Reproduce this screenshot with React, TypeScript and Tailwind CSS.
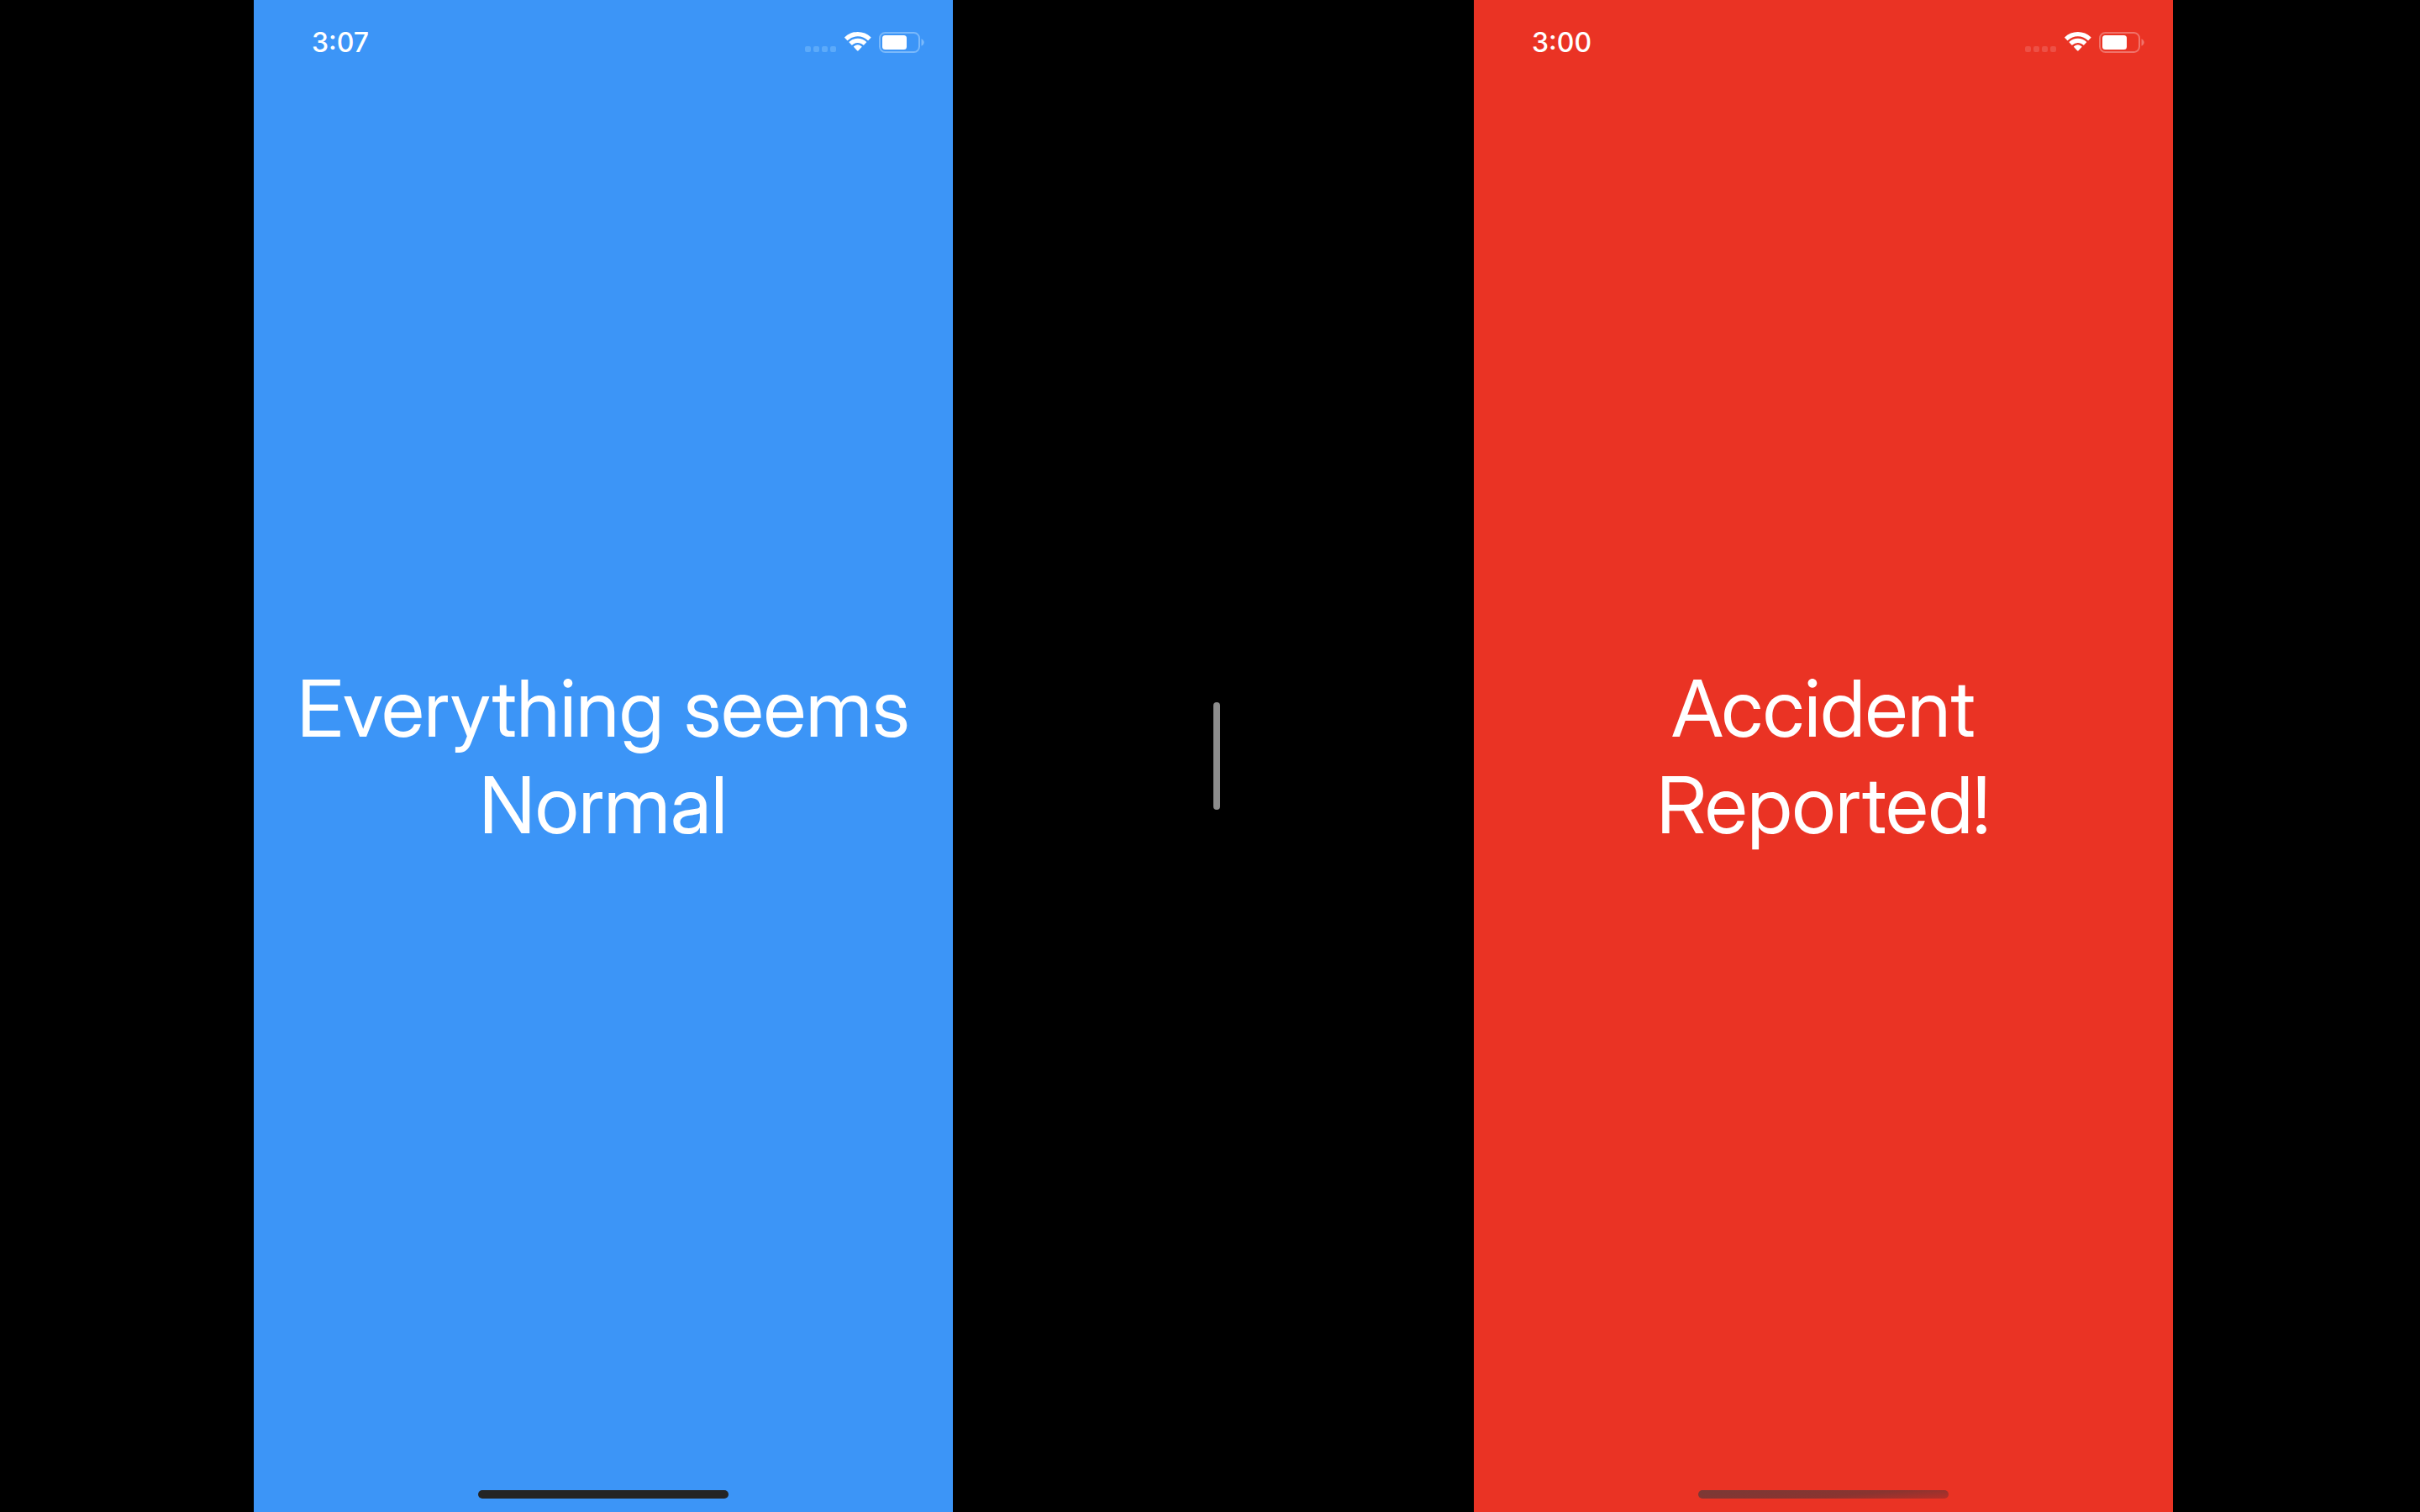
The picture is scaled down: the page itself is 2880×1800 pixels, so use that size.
type PhoneProps = {
  time: string;
  lines: string[];
  screen: string;
  dots: string;
  battery: string;
  indicator: string;
};

function StatusIcons({ dots, battery }: { dots: string; battery: string }) {
  return (
    <div className="flex items-center">
      <svg width="142" height="28" viewBox="0 0 142 28" role="img" aria-label="No signal, Wi-Fi on, battery 65 percent">
        <g className={dots}>
          <rect x="0" y="18" width="7" height="7" rx="2" />
          <rect x="10" y="18" width="7" height="7" rx="2" />
          <rect x="20" y="18" width="7" height="7" rx="2" />
          <rect x="30" y="18" width="7" height="7" rx="2" />
        </g>
        <g className="fill-white">
          <path d="M62.8 6.3c4.4 0 8.6 1.7 11.8 4.7.25.23.63.23.87 0l2.9-2.9c.26-.26.26-.68 0-.94a22.6 22.6 0 0 0-31.14 0c-.26.26-.26.68 0 .94l2.9 2.9c.24.23.62.23.87 0a17.2 17.2 0 0 1 11.8-4.7z" />
          <path d="M62.8 14c2.4 0 4.7.9 6.5 2.5.25.24.63.23.87 0l2.85-2.9c.26-.26.26-.68 0-.93a15 15 0 0 0-20.44 0c-.26.25-.26.67 0 .93l2.85 2.9c.24.23.62.24.87 0A9.7 9.7 0 0 1 62.8 14z" />
          <path d="M67.5 19.1c.26-.26.25-.68-.03-.92a7.5 7.5 0 0 0-9.34 0c-.28.24-.29.66-.03.92l4.2 4.3c.26.27.74.27 1 0z" />
        </g>
        <rect x="89" y="2" width="47" height="23" rx="6.5" className={`fill-none stroke-2 ${battery}`} />
        <path d="M138.5 9.2v8.6c1.9-.8 3.2-2.4 3.2-4.3s-1.3-3.5-3.2-4.3z" className={`stroke-none fill-current ${battery}`} />
        <rect x="92" y="5" width="29" height="17" rx="3.5" className="fill-white" />
      </svg>
    </div>
  );
}

function Phone({ time, lines, screen, dots, battery, indicator }: PhoneProps) {
  return (
    <section className={`relative flex h-full aspect-[104/225] flex-col ${screen}`}>
      <header className="flex h-[102px] items-center justify-between pl-[69px] pr-[34px]">
        <time className="text-[32px] leading-10 font-medium">{time}</time>
        <StatusIcons dots={dots} battery={battery} />
      </header>
      <main className="flex flex-1 items-center justify-center pb-[74px]">
        <h1 className="text-center font-['Inter_Display','Inter',sans-serif] text-[94px] leading-[115px] font-normal [font-variation-settings:'opsz'_32]">
          {lines.map((line) => (
            <span key={line} className="block whitespace-nowrap">
              {line}
            </span>
          ))}
        </h1>
      </main>
      <footer className="flex justify-center pb-4">
        <div className={`h-2.5 w-[298px] rounded-full ${indicator}`} />
      </footer>
    </section>
  );
}

export default function App() {
  return (
    <div className="grid h-screen grid-cols-[1436fr_24px_1420fr] overflow-hidden bg-black font-['Inter',sans-serif] text-white">
      <div className="flex h-screen justify-center">
        <Phone
          time="3:07"
          lines={["Everything seems", "Normal"]}
          screen="bg-[#3c95f7]"
          dots="fill-[#5caafa]"
          battery="stroke-[#7ab9fb] text-[#7ab9fb]"
          indicator="bg-[#242424]"
        />
      </div>
      <div className="flex items-center justify-center">
        <div role="separator" aria-orientation="vertical" className="h-32 w-2 rounded-full bg-[#8c8c8c]" />
      </div>
      <div className="flex h-screen justify-center">
        <Phone
          time="3:00"
          lines={["Accident", "Reported!"]}
          screen="bg-[#ea3324]"
          dots="fill-[#ed5045]"
          battery="stroke-[#f0736a] text-[#f0736a]"
          indicator="bg-linear-[175deg,#7a3936_0%,#8a3430_60%,#b82f28_100%]"
        />
      </div>
    </div>
  );
}
